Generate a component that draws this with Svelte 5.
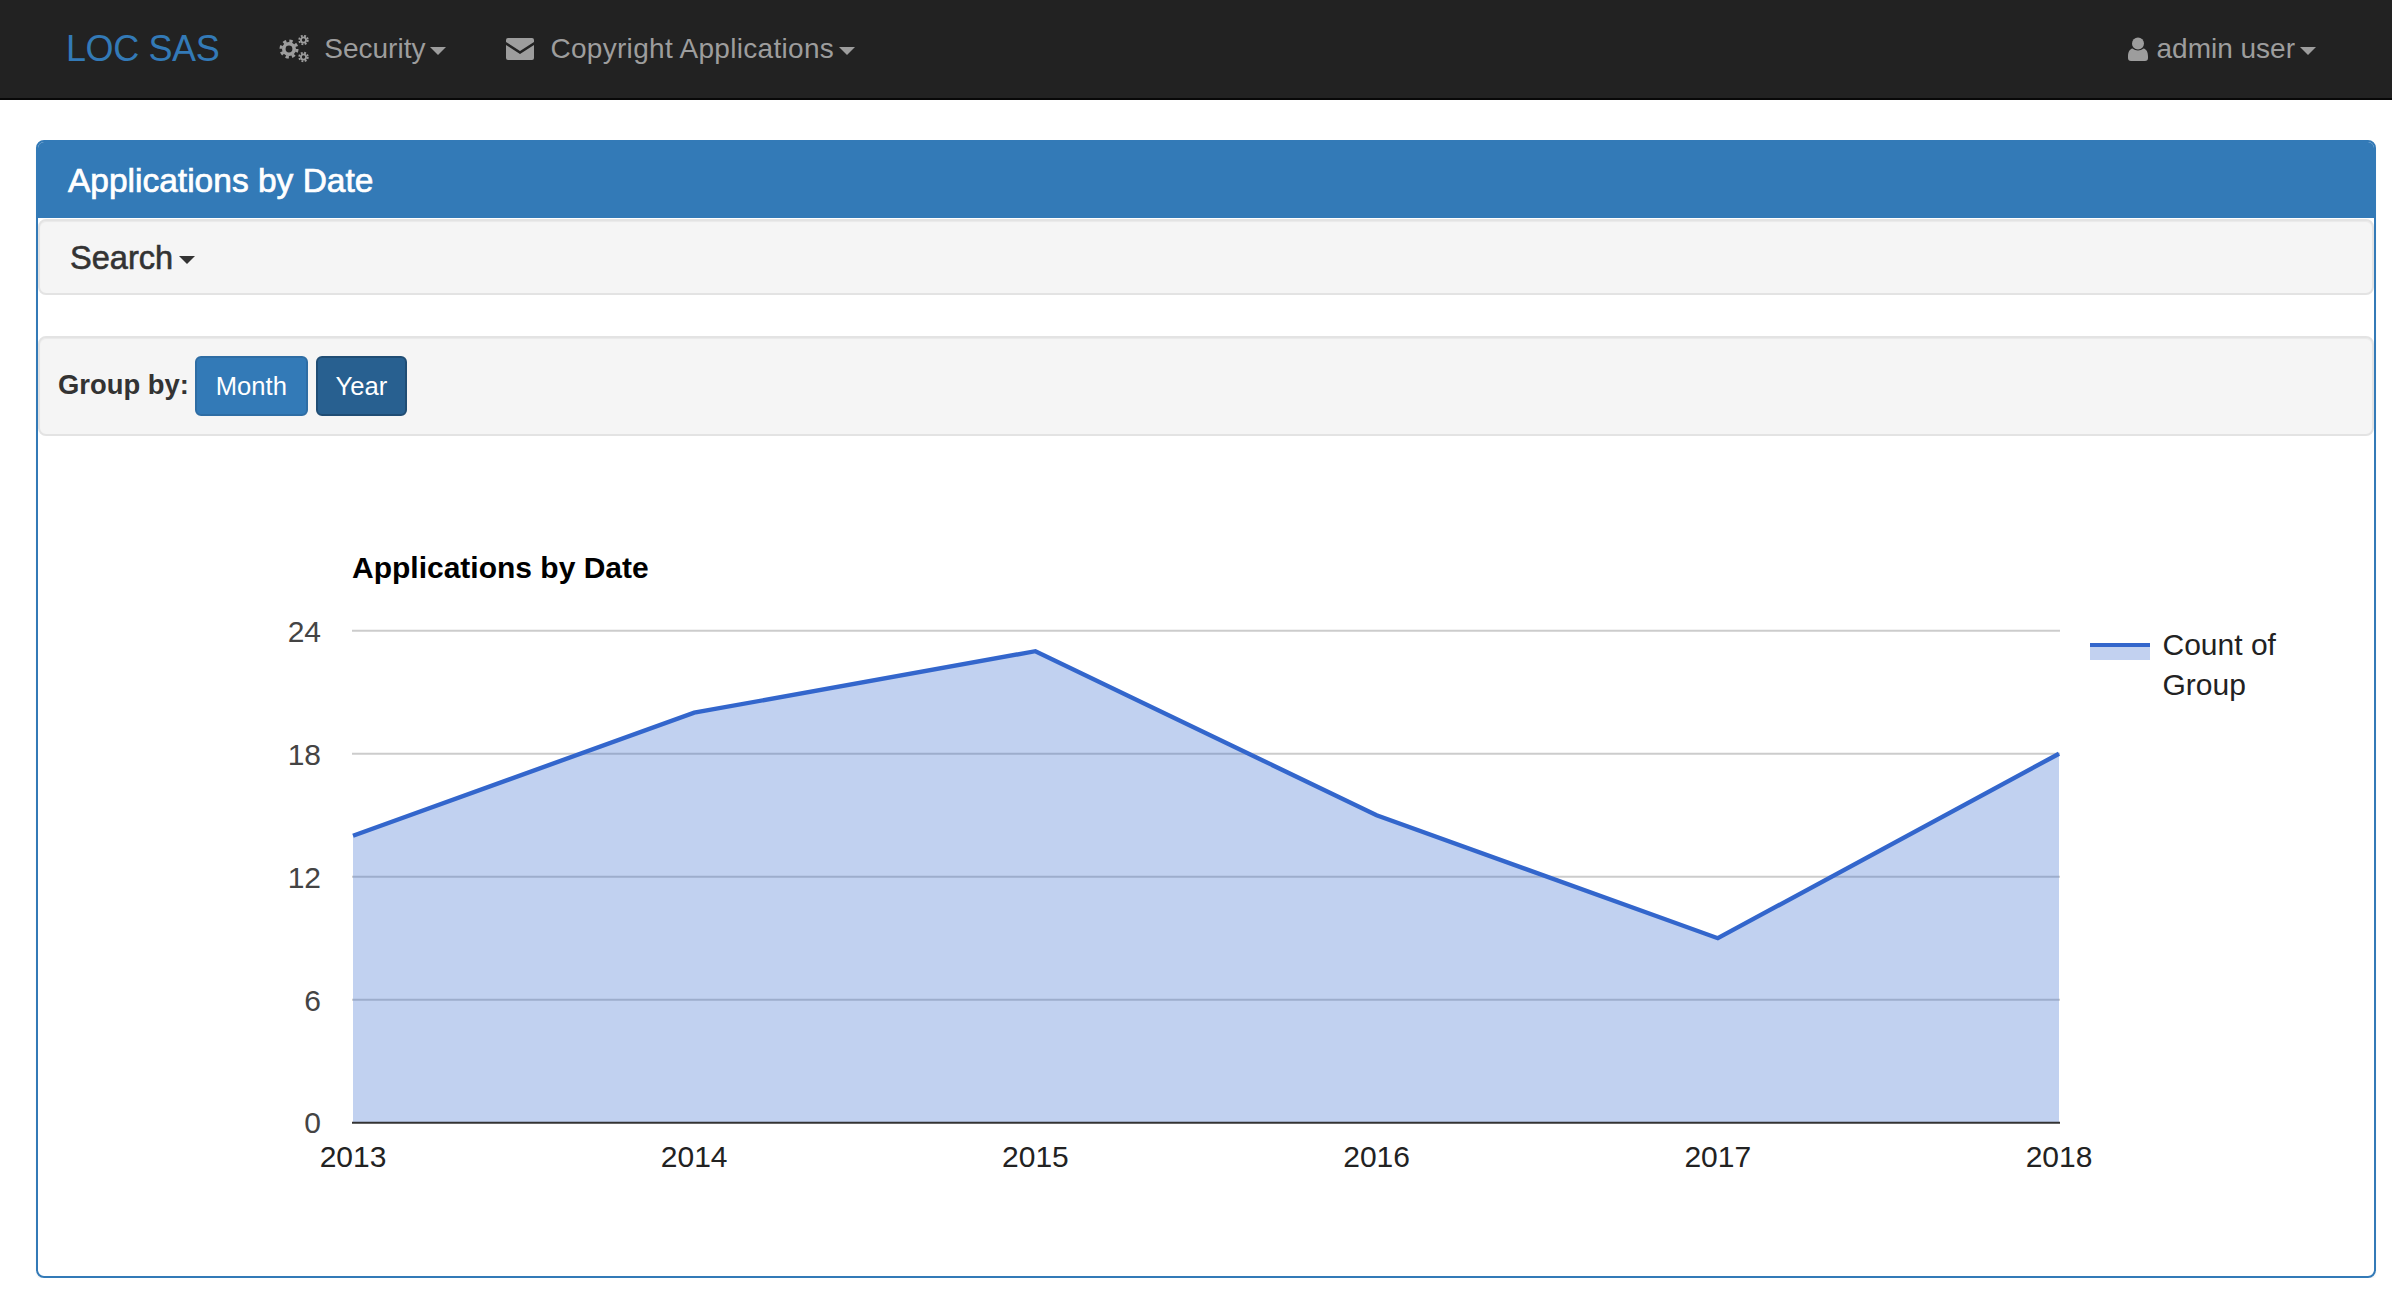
<script>
  const font = 30;
  const left = 353;
  const step = 341.2;
  const base = 1122.7;
  const unit = 20.5;
  const years = [2013, 2014, 2015, 2016, 2017, 2018];
  const values = [14, 20, 23, 15, 9, 18];
  const ticks = [24, 18, 12, 6];
  const xs = years.map((_, i) => left + step * i);
  const ys = values.map((v) => base - v * unit);
  const line = xs.map((x, i) => `${x},${ys[i]}`).join(' ');
  const area = `${left},${base} ${line} ${xs[5]},${base}`;
</script>

<nav class="navbar">
  <a class="brand" href="#top">LOC SAS</a>
  <a class="nav-item security" href="#top">
    <svg class="gears" viewBox="0 0 30 28" aria-hidden="true">
      <g fill="none" stroke="#9d9d9d">
        <circle cx="10" cy="14" r="5.2" stroke-width="3.6" />
        <circle cx="10" cy="14" r="8" stroke-width="3" stroke-dasharray="3.3 3" />
        <circle cx="24.5" cy="5" r="2.6" stroke-width="1.8" />
        <circle cx="24.5" cy="5" r="4.3" stroke-width="1.8" stroke-dasharray="1.9 1.5" />
        <circle cx="24.5" cy="22" r="2.6" stroke-width="1.8" />
        <circle cx="24.5" cy="22" r="4.3" stroke-width="1.8" stroke-dasharray="1.9 1.5" />
      </g>
    </svg>
    <span>Security</span><i class="caret"></i>
  </a>
  <a class="nav-item copyright" href="#top">
    <svg class="envelope" viewBox="0 0 28 22" aria-hidden="true">
      <path fill="#9d9d9d" d="M2 0h24a2 2 0 0 1 2 2v2L14 13 0 4V2a2 2 0 0 1 2-2zM0 7l14 9 14-9v13a2 2 0 0 1-2 2H2a2 2 0 0 1-2-2z" />
    </svg>
    <span>Copyright Applications</span><i class="caret"></i>
  </a>
  <a class="nav-item user" href="#top">
    <svg class="person" viewBox="0 0 20 24" aria-hidden="true">
      <circle cx="10" cy="6.4" r="6" fill="#9d9d9d" />
      <path fill="#9d9d9d" d="M4.500 11.500c3 2.600 8 2.600 11 0 3 .6 4.500 3.600 4.500 8V21a3 3 0 0 1-3 3H3a3 3 0 0 1-3-3v-1.500c0-4.400 1.500-7.400 4.500-8z" />
    </svg>
    <span>admin user</span><i class="caret"></i>
  </a>
</nav>

<main class="panel">
  <h1 class="panel-heading">Applications by Date</h1>
  <section class="well search-well">
    <span class="search">Search</span><i class="caret dark"></i>
  </section>
  <section class="well group-well">
    <strong class="group-label">Group by:</strong>
    <button class="btn month" type="button">Month</button>
    <button class="btn year" type="button">Year</button>
  </section>
  <svg class="chart" viewBox="38 436 2336 840" aria-label="Applications by Date chart">
    <text class="chart-title" x="352" y="577.500">Applications by Date</text>

    {#each ticks as t}
      <line x1="352" x2="2060" y1={base - t * unit} y2={base - t * unit} stroke="#cccccc" stroke-width="2" />
      <text class="y-label" x="321" y={base - t * unit + 11} font-size={font}>{t}</text>
    {/each}
    <text class="y-label" x="321" y="1133" font-size={font}>0</text>

    <polygon points={area} fill="#3366cc" fill-opacity="0.3" />
    <line x1="352" x2="2060" y1={base} y2={base} stroke="#333333" stroke-width="2" />
    <polyline points={line} fill="none" stroke="#3366cc" stroke-width="4.400" />

    {#each years as y, i}
      <text class="x-label" x={xs[i]} y="1167" font-size={font}>{y}</text>
    {/each}

    <rect x="2090" y="643" width="60" height="17" fill="#c2d1f0" />
    <rect x="2090" y="643" width="60" height="4" fill="#3366cc" />
    <text class="legend" x="2162.500" y="655" font-size={font}>Count of</text>
    <text class="legend" x="2162.500" y="695" font-size={font}>Group</text>
  </svg>
</main>

<style>
  :global(body) {
    margin: 0;
    background: #fff;
    font-family: "Liberation Sans", Arial, sans-serif;
  }

  .navbar {
    display: flex;
    align-items: center;
    height: 98px;
    background: #222222;
    border-bottom: 2px solid #080808;
    padding: 0 76px 0 66px;
    box-sizing: content-box;
  }

  .brand {
    font-size: 36px;
    color: #337ab7;
    text-decoration: none;
    letter-spacing: -0.4px;
    margin-right: 60px;
  }

  .nav-item {
    display: flex;
    align-items: center;
    color: #9d9d9d;
    font-size: 28px;
    text-decoration: none;
  }

  .copyright span { letter-spacing: 0.3px; }
  .security { margin-right: 60px; }
  .user { margin-left: auto; }

  .gears { width: 30px; height: 28px; margin-right: 15px; }
  .envelope { width: 28px; height: 22px; margin-right: 16px; }
  .person { width: 20px; height: 24px; margin-right: 8px; }

  .caret {
    display: inline-block;
    width: 0;
    height: 0;
    margin-left: 5px;
    margin-top: 3px;
    border-top: 8px solid #9d9d9d;
    border-left: 8px solid transparent;
    border-right: 8px solid transparent;
  }

  .caret.dark {
    border-top-color: #333333;
    margin-left: 6px;
    margin-top: 4px;
  }

  .panel {
    margin: 40px 16px 0 36px;
    height: 1138px;
    box-sizing: border-box;
    border: 2px solid #337ab7;
    border-radius: 8px;
    box-shadow: 0 2px 2px rgba(0, 0, 0, 0.05);
    overflow: hidden;
  }

  .panel-heading {
    margin: 0 -2px;
    height: 76px;
    box-sizing: border-box;
    padding: 1px 32px 0;
    display: flex;
    align-items: center;
    background: #337ab7;
    color: #fff;
    font-size: 33.500px;
    font-weight: normal;
    -webkit-text-stroke: 0.7px #fff;
  }

  .well {
    display: flex;
    align-items: center;
    box-sizing: border-box;
    background: #f5f5f5;
    border: 2px solid #e3e3e3;
    border-radius: 8px;
    box-shadow: inset 0 1px 1px rgba(0, 0, 0, 0.05);
  }

  .search-well {
    height: 76px;
    margin-top: 1px;
    padding: 2px 0 0 30px;
    margin-bottom: 41px;
  }

  .search {
    font-size: 32.600px;
    color: #333333;
    -webkit-text-stroke: 0.6px #333;
  }

  .group-well {
    height: 100px;
    padding-left: 18px;
  }

  .group-label {
    font-size: 27.400px;
    color: #333333;
    margin-right: 6px;
    margin-top: -2px;
  }

  .btn {
    height: 60px;
    margin: 0 8px 0 0;
    padding: 0;
    box-sizing: border-box;
    border-radius: 6px;
    color: #fff;
    font: 25.600px "Liberation Sans", Arial, sans-serif;
  }

  .month { width: 113px; background: #337ab7; border: 2px solid #2e6da4; }
  .year { width: 91px; background: #286090; border: 2px solid #204d74; }

  .chart {
    display: block;
    width: 2336px;
    height: 840px;
    font-family: "Liberation Sans", Arial, sans-serif;
  }

  .chart-title { font-size: 30px; font-weight: bold; fill: #000; }
  .y-label { text-anchor: end; fill: #444444; }
  .x-label { text-anchor: middle; fill: #222222; }
  .legend { fill: #222222; }
</style>
